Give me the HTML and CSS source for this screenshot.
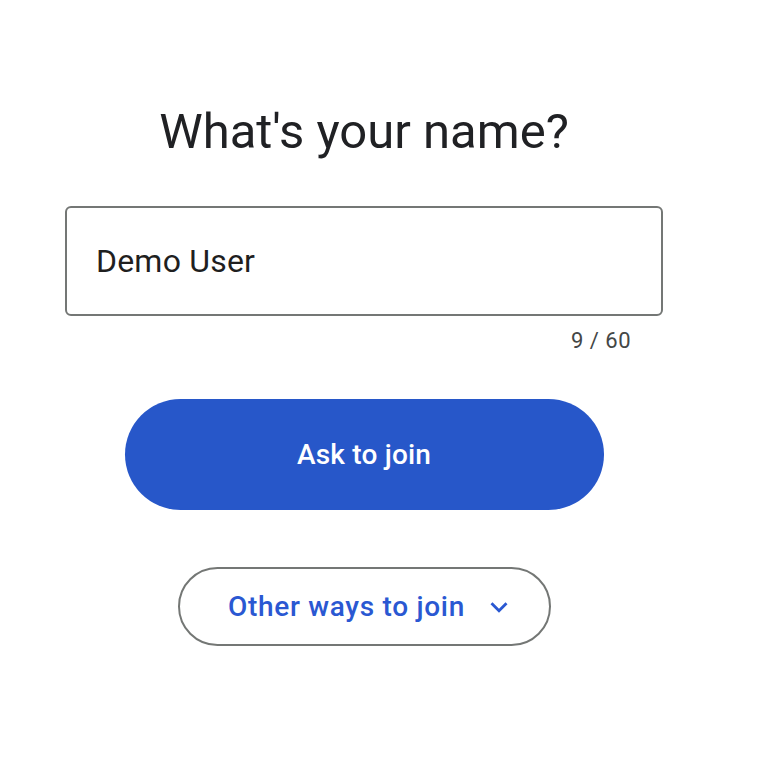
FILE: index.html
```html
<!DOCTYPE html>
<html lang="en">
<head>
<meta charset="utf-8">
<title>What's your name?</title>
<link rel="stylesheet" href="styles.css">
</head>
<body>
<main class="join">
  <h1 class="title">What's your name?</h1>
  <div class="field">
    <div class="field-box">
      <span class="field-value">Demo User</span>
    </div>
    <div class="counter">9 / 60</div>
  </div>
  <button class="btn-primary" type="button">Ask to join</button>
  <button class="btn-outline" type="button">
    <span class="btn-outline-label">Other ways to join</span>
    <svg class="chevron" viewBox="0 0 24 24" width="34" height="34" aria-hidden="true">
      <path d="M16.59 8.59L12 13.17 7.41 8.59 6 10l6 6 6-6z" fill="currentColor"/>
    </svg>
  </button>
</main>
</body>
</html>
```
FILE: styles.css
```css
html, body {
  margin: 0;
  padding: 0;
  background: #ffffff;
}

body {
  font-family: Roboto, "Open Sans", "Liberation Sans", sans-serif;
  color: #202124;
}

.join {
  width: 598px;
  margin-left: 65px;
  display: flex;
  flex-direction: column;
  align-items: center;
}

.title {
  margin: 104px 0 0 0;
  font-size: 49px;
  line-height: 56px;
  font-weight: 400;
  color: #202124;
  letter-spacing: 0;
}

.field {
  width: 100%;
  margin-top: 46px;
  display: flex;
  flex-direction: column;
}

.field-box {
  box-sizing: border-box;
  height: 110px;
  border: 2px solid #747775;
  border-radius: 6px;
  display: flex;
  align-items: center;
  padding-left: 29px;
}

.field-value {
  font-size: 32px;
  color: #1f1f1f;
  letter-spacing: 0.2px;
}

.counter {
  align-self: flex-end;
  margin-right: 32px;
  margin-top: 11px;
  font-size: 22px;
  line-height: 28px;
  letter-spacing: 0.5px;
  color: #444746;
}

.btn-primary {
  margin-top: 44px;
  width: 479px;
  height: 111px;
  border: none;
  border-radius: 56px;
  background: #2757c9;
  color: #ffffff;
  font-family: inherit;
  font-size: 28px;
  font-weight: 500;
  letter-spacing: 0.2px;
  cursor: pointer;
}

.btn-outline {
  margin-top: 57px;
  box-sizing: border-box;
  width: 373px;
  height: 79px;
  border: 2px solid #747775;
  border-radius: 40px;
  background: #ffffff;
  color: #2a58d2;
  font-family: inherit;
  font-size: 28px;
  font-weight: 500;
  letter-spacing: 0.7px;
  display: flex;
  align-items: center;
  justify-content: center;
  gap: 17px;
  padding: 0 0 0 16px;
  cursor: pointer;
}

.chevron {
  display: block;
  flex: none;
}
```
